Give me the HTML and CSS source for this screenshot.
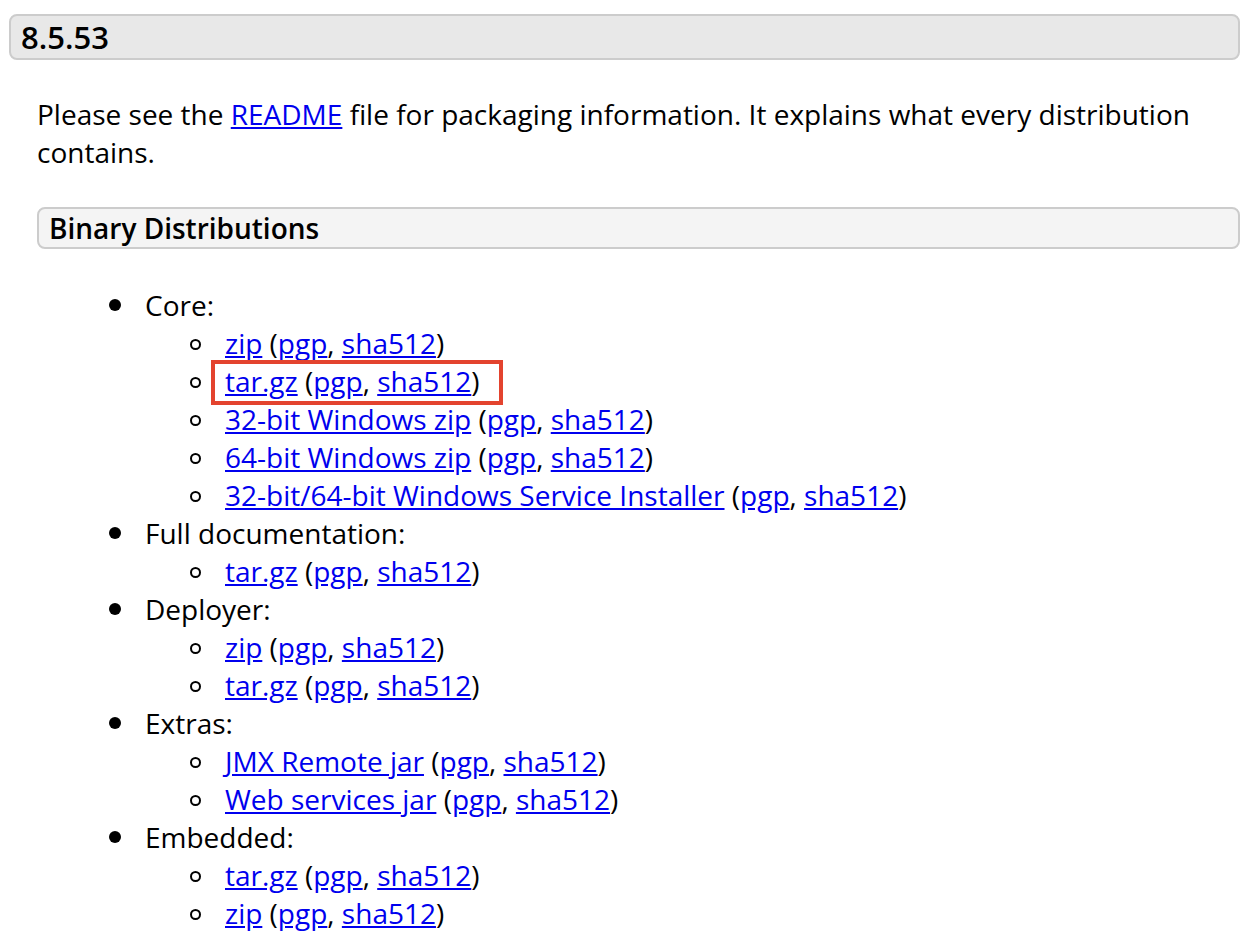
FILE: index.html
```html
<!DOCTYPE html>
<html>
<head>
<meta charset="utf-8">
<title>Tomcat 8.5.53</title>
<link rel="stylesheet" href="styles.css">
</head>
<body>
<h3 class="version">8.5.53</h3>
<div class="content">
  <p class="intro">Please see the <a href="#">README</a> file for packaging information. It explains what every distribution contains.</p>
  <h4 class="sub">Binary Distributions</h4>
  <ul class="outer">
    <li>Core:
      <ul class="inner">
        <li><a href="#">zip</a> (<a href="#">pgp</a>, <a href="#">sha512</a>)</li>
        <li><span class="marked"><a href="#">tar.gz</a> (<a href="#">pgp</a>, <a href="#">sha512</a>)</span></li>
        <li><a href="#">32-bit Windows zip</a> (<a href="#">pgp</a>, <a href="#">sha512</a>)</li>
        <li><a href="#">64-bit Windows zip</a> (<a href="#">pgp</a>, <a href="#">sha512</a>)</li>
        <li><a href="#">32-bit/64-bit Windows Service Installer</a> (<a href="#">pgp</a>, <a href="#">sha512</a>)</li>
      </ul>
    </li>
    <li>Full documentation:
      <ul class="inner">
        <li><a href="#">tar.gz</a> (<a href="#">pgp</a>, <a href="#">sha512</a>)</li>
      </ul>
    </li>
    <li>Deployer:
      <ul class="inner">
        <li><a href="#">zip</a> (<a href="#">pgp</a>, <a href="#">sha512</a>)</li>
        <li><a href="#">tar.gz</a> (<a href="#">pgp</a>, <a href="#">sha512</a>)</li>
      </ul>
    </li>
    <li>Extras:
      <ul class="inner">
        <li><a href="#">JMX Remote jar</a> (<a href="#">pgp</a>, <a href="#">sha512</a>)</li>
        <li><a href="#">Web services jar</a> (<a href="#">pgp</a>, <a href="#">sha512</a>)</li>
      </ul>
    </li>
    <li>Embedded:
      <ul class="inner">
        <li><a href="#">tar.gz</a> (<a href="#">pgp</a>, <a href="#">sha512</a>)</li>
        <li><a href="#">zip</a> (<a href="#">pgp</a>, <a href="#">sha512</a>)</li>
      </ul>
    </li>
  </ul>
</div>
</body>
</html>
```
FILE: styles.css
```css
html, body {
  background: #fff;
}
body {
  margin: 0;
  padding: 14px 18px 0 9px;
  font-family: "Open Sans", "DejaVu Sans", sans-serif;
  font-size: 28px;
  line-height: 38px;
  color: #000;
}
a {
  color: #0000ee;
  text-decoration: underline;
}
.version {
  margin: 0;
  background: #e8e8e8;
  border: 2px solid #cccccc;
  border-radius: 8px;
  padding: 2px 10px;
  font-size: 31px;
  font-weight: 600;
  line-height: 38px;
}
.content {
  padding-left: 28px;
}
.intro {
  margin: 35px 0 36px;
}
.sub {
  margin: 0;
  background: #f4f4f4;
  border: 2px solid #cccccc;
  border-radius: 8px;
  padding: 0 10px;
  font-size: 28px;
  font-weight: 600;
  line-height: 38px;
}
.outer {
  margin: 37px 0 0;
  padding-left: 108px;
  list-style: none;
}
.inner {
  margin: 0;
  padding-left: 80px;
  list-style: none;
}
.outer > li::before {
  content: "";
  display: inline-block;
  width: 12px;
  height: 12px;
  border-radius: 50%;
  background: #000;
  margin-left: -36px;
  margin-right: 24px;
  vertical-align: 5px;
}
.inner > li::before {
  content: "";
  display: inline-block;
  box-sizing: border-box;
  width: 11px;
  height: 11px;
  border-radius: 50%;
  border: 2px solid #000;
  background: transparent;
  margin-left: -35px;
  margin-right: 24px;
  vertical-align: 4px;
}
.marked {
  position: relative;
}
.marked::after {
  content: "";
  position: absolute;
  left: -14px;
  right: -23px;
  top: -2px;
  bottom: -5px;
  border: 4px solid #e3432e;
  pointer-events: none;
}
```
